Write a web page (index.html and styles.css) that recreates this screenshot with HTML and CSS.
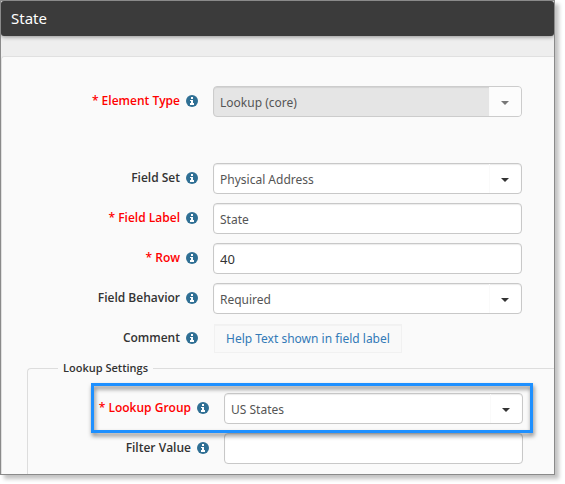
FILE: index.html
```html
<!DOCTYPE html>
<html lang="en">
<head>
<meta charset="utf-8">
<meta name="viewport" content="width=device-width, initial-scale=1">
<title>State</title>
<link rel="stylesheet" href="styles.css">
</head>
<body>
<svg class="defs" aria-hidden="true">
  <symbol id="info" viewBox="0 0 12 12">
    <circle cx="6" cy="6" r="6" fill="#2f6f94"/>
    <path d="M5 2h2v2H5zM4 5h3v3h1v2H4V8h1V6H4z" fill="#fff"/>
  </symbol>
  <symbol id="caret" viewBox="0 0 8 4">
    <path d="M0 0h8L4 4z" fill="currentColor"/>
  </symbol>
</svg>
<main class="window">
  <header class="titlebar"><h1>State</h1></header>
  <form class="panel">
    <div class="row row-type">
      <label class="label required" for="type">* Element Type <svg class="info"><use href="#info"/></svg></label>
      <div class="select disabled">
        <select id="type" disabled><option>Lookup (core)</option></select>
        <span class="arrow"><svg><use href="#caret"/></svg></span>
      </div>
    </div>
    <div class="row">
      <label class="label" for="set">Field Set <svg class="info"><use href="#info"/></svg></label>
      <div class="select">
        <select id="set"><option>Physical Address</option></select>
        <span class="arrow"><svg><use href="#caret"/></svg></span>
      </div>
    </div>
    <div class="row">
      <label class="label required" for="name">* Field Label <svg class="info"><use href="#info"/></svg></label>
      <input class="input" id="name" type="text" value="State">
    </div>
    <div class="row">
      <label class="label required" for="order">* Row <svg class="info"><use href="#info"/></svg></label>
      <input class="input number" id="order" type="text" value="40">
    </div>
    <div class="row">
      <label class="label" for="behavior">Field Behavior <svg class="info"><use href="#info"/></svg></label>
      <div class="select">
        <select id="behavior"><option>Required</option></select>
        <span class="arrow"><svg><use href="#caret"/></svg></span>
      </div>
    </div>
    <div class="row">
      <label class="label" for="comment">Comment <svg class="info"><use href="#info"/></svg></label>
      <button class="comment" id="comment" type="button">Help Text shown in field label</button>
    </div>
    <fieldset class="group">
      <legend>Lookup Settings</legend>
      <div class="row highlight">
        <label class="label required" for="lookup">* Lookup Group <svg class="info"><use href="#info"/></svg></label>
        <div class="select">
          <select id="lookup"><option>US States</option></select>
          <span class="arrow"><svg><use href="#caret"/></svg></span>
        </div>
      </div>
      <div class="row">
        <label class="label" for="filter">Filter Value <svg class="info"><use href="#info"/></svg></label>
        <input class="input" id="filter" type="text">
      </div>
    </fieldset>
  </form>
</main>
</body>
</html>
```
FILE: styles.css
```css
* { box-sizing: border-box; }

body {
  margin: 0;
  padding: 0 10px 10px 0;
  background: #fff;
  color: #333;
  font: 12px/16px "Noto Sans", "Open Sans", sans-serif;
}

.defs { position: absolute; width: 0; height: 0; }

.window {
  border: 1px solid #8a8a8a;
  background: #eee;
  box-shadow: 4px 4px 4px rgba(0, 0, 0, 0.24);
  overflow: hidden;
}

.titlebar {
  height: 35px;
  padding: 0 10px;
  border-radius: 3px;
  background: #3b3b3b;
  box-shadow: 0 1px 4px rgba(0, 0, 0, 0.4);
}

h1 {
  margin: 0;
  color: #fff;
  font-size: 15px;
  font-weight: 400;
  line-height: 35px;
}

.panel {
  display: flex;
  flex-direction: column;
  gap: 9px;
  margin-top: 20px;
  padding-top: 29px;
  border-top: 1px solid #e0e0e0;
  border-left: 1px solid #e0e0e0;
  border-top-left-radius: 3px;
  background: #fafafa;
}

.row {
  display: grid;
  grid-template-columns: 196px minmax(0, 1fr);
  column-gap: 15px;
  align-items: center;
  min-height: 31px;
  padding-right: 32px;
}

.row-type { margin-bottom: 37px; }

.label {
  display: flex;
  justify-content: flex-end;
  align-items: center;
  gap: 6px;
  padding-bottom: 2px;
  font-family: "Open Sans", "Noto Sans", sans-serif;
  font-weight: 600;
  white-space: nowrap;
}

.required { color: #f00; }

.info { flex: none; width: 12px; height: 12px; }

.input,
.select {
  width: 100%;
  height: 31px;
  border: 1px solid #c8c8c8;
  border-radius: 4px;
  background: #fff;
  box-shadow: inset 0 1px 1px rgba(0, 0, 0, 0.08);
}

.input,
select {
  margin: 0;
  padding: 2px 6px 0;
  color: #555;
  font: inherit;
}

.number { color: #333; font-size: 13px; padding-top: 0; }

.select { display: flex; overflow: hidden; }

select {
  flex: 1;
  min-width: 0;
  appearance: none;
  border: 0;
  background: transparent;
  opacity: 1;
}

.arrow {
  display: flex;
  justify-content: center;
  align-items: center;
  width: 32px;
  padding: 2px 2px 0 0;
  border-left: 1px solid #fafafa;
  color: #333;
  pointer-events: none;
}

.arrow svg { width: 8px; height: 4px; }

.disabled { border-color: #ccc; background: #e5e5e5; }
.disabled .arrow { background: #fcfcfc; color: #777; }

.comment {
  justify-self: start;
  height: 29px;
  margin-left: 1px;
  padding: 0 11px;
  border: 1px solid #f1f1f1;
  background: #f9f9f9;
  box-shadow: inset 0 1px 1px rgba(0, 0, 0, 0.03);
  color: #337ab7;
  font: inherit;
}

.group {
  display: flex;
  flex-direction: column;
  gap: 9px;
  min-width: 0;
  margin: -3px 0 0 25px;
  padding: 17px 0 10px;
  border: solid #ddd;
  border-width: 1px 0 0 1px;
  border-top-left-radius: 4px;
}

legend {
  margin-left: 30px;
  padding: 0 5px;
  font-family: "Open Sans", "Noto Sans", sans-serif;
  font-size: 11px;
  font-weight: 600;
}

.group .row {
  grid-template-columns: 181px minmax(0, 1fr);
  padding-right: 31px;
}

.highlight { position: relative; }

.highlight::after {
  content: "";
  position: absolute;
  inset: -10px 21px -9px 63px;
  border: 3px solid #1e90ff;
  filter: drop-shadow(1px 3px 2px rgba(0, 0, 0, 0.5));
  pointer-events: none;
}
```
